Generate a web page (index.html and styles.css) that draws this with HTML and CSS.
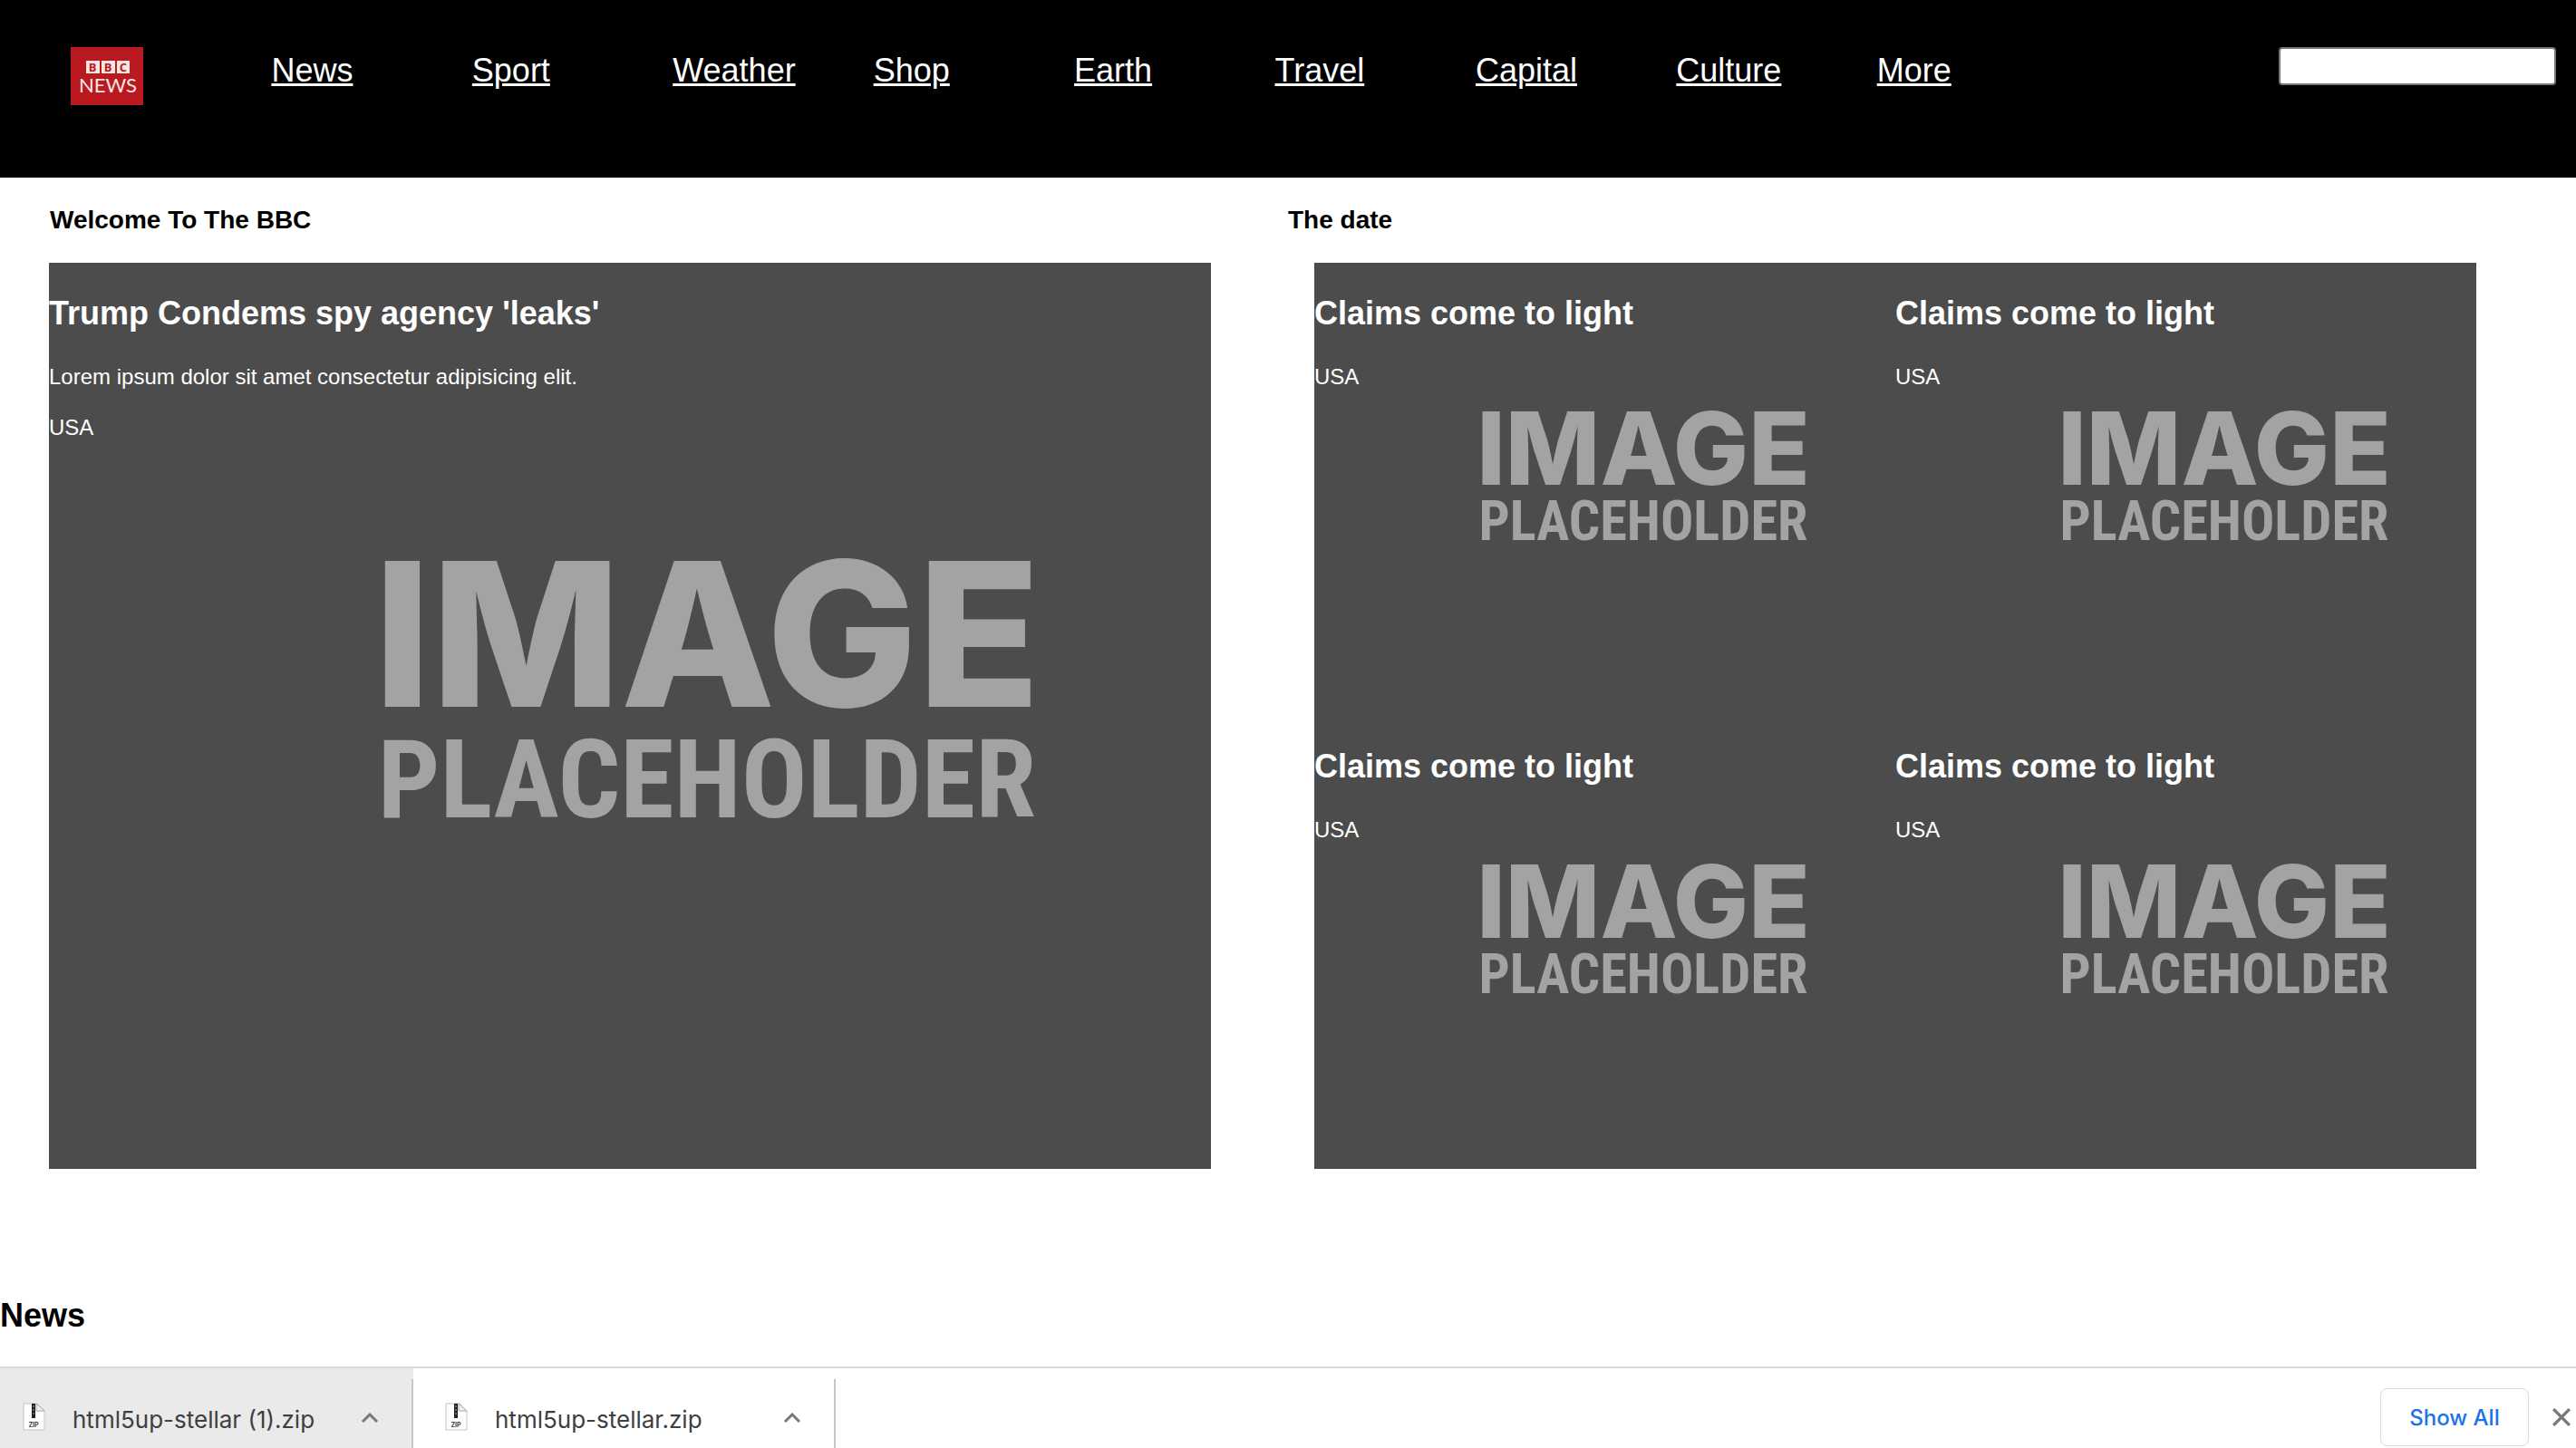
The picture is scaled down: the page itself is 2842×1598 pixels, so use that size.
FILE: index.html
```html
<!DOCTYPE html>
<html lang="en">
<head>
<meta charset="utf-8">
<title>BBC News</title>
<link rel="stylesheet" href="styles.css">
</head>
<body>
<svg class="sprite" aria-hidden="true">
  <symbol id="placeholder" viewBox="0 0 1282 1001">
    <text class="ph-image" x="726" y="491">IMAGE</text>
    <text class="ph-word" x="726" y="613">PLACEHOLDER</text>
  </symbol>
  <symbol id="zip" viewBox="0 0 26 34">
    <path d="M1 2h15l8 8v21H1z" fill="#fdfdfd" stroke="#c4c4c4" stroke-width="1"/>
    <path d="M15 2v8h9z" fill="#f2f2f2" stroke="#a8a8a8" stroke-width="1"/>
    <path d="M10 2h4v16h-4z" fill="#222"/>
    <path d="M12 4v12" stroke="#aaa" stroke-width="1" stroke-dasharray="2 2"/>
    <text class="zip-label" x="12" y="28">ZIP</text>
  </symbol>
  <symbol id="chevron" viewBox="0 0 20 14">
    <path d="M2 12l8-8 8 8" fill="none" stroke="#75787b" stroke-width="3"/>
  </symbol>
</svg>

<header class="header">
  <nav class="nav">
    <a class="logo" href="#" aria-label="BBC News home">
      <svg class="logo-mark" viewBox="0 0 80 64">
        <path fill="#bb1920" d="M0 0h80v64H0z"/>
        <path fill="#f6e6e6" d="M17 15h15v14H17zM34 15h15v14H34zM51 15h14v14H51z"/>
        <text class="logo-bbc" x="24" y="27">B</text>
        <text class="logo-bbc" x="41" y="27">B</text>
        <text class="logo-bbc" x="58" y="27">C</text>
        <text class="logo-news" x="41" y="50">NEWS</text>
      </svg>
    </a>
    <a class="nav-link" href="#">News</a>
    <a class="nav-link" href="#">Sport</a>
    <a class="nav-link" href="#">Weather</a>
    <a class="nav-link" href="#">Shop</a>
    <a class="nav-link" href="#">Earth</a>
    <a class="nav-link" href="#">Travel</a>
    <a class="nav-link" href="#">Capital</a>
    <a class="nav-link" href="#">Culture</a>
    <a class="nav-link" href="#">More</a>
  </nav>
  <input class="search" type="text" aria-label="Search">
</header>

<main class="main">
  <div class="titles">
    <h3 class="title welcome">Welcome To The BBC</h3>
    <h3 class="title">The date</h3>
  </div>
  <div class="stories">
    <article class="story lead">
      <svg class="backdrop" aria-hidden="true"><use href="#placeholder"/></svg>
      <h2 class="headline">Trump Condems spy agency 'leaks'</h2>
      <p class="copy">Lorem ipsum dolor sit amet consectetur adipisicing elit.</p>
      <p class="copy">USA</p>
    </article>
    <div class="story-grid">
      <article class="story">
        <svg class="backdrop" aria-hidden="true"><use href="#placeholder"/></svg>
        <h2 class="headline">Claims come to light</h2>
        <p class="copy">USA</p>
      </article>
      <article class="story">
        <svg class="backdrop" aria-hidden="true"><use href="#placeholder"/></svg>
        <h2 class="headline">Claims come to light</h2>
        <p class="copy">USA</p>
      </article>
      <article class="story">
        <svg class="backdrop" aria-hidden="true"><use href="#placeholder"/></svg>
        <h2 class="headline">Claims come to light</h2>
        <p class="copy">USA</p>
      </article>
      <article class="story">
        <svg class="backdrop" aria-hidden="true"><use href="#placeholder"/></svg>
        <h2 class="headline">Claims come to light</h2>
        <p class="copy">USA</p>
      </article>
    </div>
  </div>
  <h2 class="section-title">News</h2>
</main>

<footer class="downloads">
  <button class="download active" type="button">
    <svg class="zip"><use href="#zip"/></svg>
    <span class="file">html5up-stellar (1).zip</span>
    <svg class="chevron"><use href="#chevron"/></svg>
  </button>
  <button class="download" type="button">
    <svg class="zip"><use href="#zip"/></svg>
    <span class="file">html5up-stellar.zip</span>
    <svg class="chevron"><use href="#chevron"/></svg>
  </button>
  <button class="show-all" type="button">Show All</button>
  <button class="close" type="button" aria-label="Close">
    <svg class="close-icon" viewBox="0 0 18 18"><path d="M1 1l16 16M17 1L1 17" stroke="#75787b" stroke-width="3"/></svg>
  </button>
</footer>
</body>
</html>
```
FILE: styles.css
```css
* { box-sizing: border-box; }

body {
  margin: 0;
  min-height: 100vh;
  display: flex;
  flex-direction: column;
  overflow: hidden;
  background: #fff;
  color: #000;
  font-family: "Liberation Sans", Arial, sans-serif;
  font-size: 24px;
}

h2, h3, p { margin: 0; }
.sprite { display: none; }

/* Header */
.header {
  display: flex;
  justify-content: space-between;
  align-items: flex-start;
  height: 196px;
  padding: 52px 22px 0 78px;
  background: #000;
}
.nav {
  display: grid;
  grid-template-columns: repeat(10, 1fr);
  width: 80.75%;
  align-items: start;
}
.logo, .logo-mark { display: block; width: 80px; height: 64px; }
.logo-bbc { font: bold 13px "Open Sans", sans-serif; fill: #bb1920; text-anchor: middle; }
.logo-news { font: 22px Lato, sans-serif; fill: #f6e6e6; text-anchor: middle; }
.nav-link { color: #fff; font-size: 36px; line-height: 52px; }
.search {
  width: 306px;
  height: 42px;
  padding: 2px 4px;
  border: 2px solid #767676;
  border-radius: 4px;
  background: #fff;
  font: inherit;
}

/* Stories */
.main { flex: 1; }
.titles {
  display: grid;
  grid-template-columns: 1fr 1fr;
  padding: 31px 0;
}
.title { font-size: 28px; line-height: 32px; }
.welcome { padding-left: 55px; }
.stories {
  display: grid;
  grid-template-columns: 1fr 1fr;
  column-gap: 114px;
  padding: 0 110px 0 54px;
}
.story-grid { display: grid; grid-template-columns: 1fr 1fr; }
.story {
  position: relative;
  min-height: 500px;
  padding-top: 35px;
  background: #4c4c4c;
  color: #fff;
}
.backdrop { position: absolute; inset: 0; width: 100%; height: 100%; }
.ph-image { font: 800 222px Inter, sans-serif; fill: #a3a3a3; text-anchor: middle; }
.ph-word { font: bold 121px "Roboto Condensed", Roboto, sans-serif; fill: #a3a3a3; text-anchor: middle; }
.headline, .copy { position: relative; }
.headline { font-size: 36px; line-height: 42px; margin-bottom: 35px; }
.copy { font-size: 24px; line-height: 28px; margin-bottom: 28px; }
.section-title { margin-top: 141px; font-size: 36px; line-height: 42px; }

/* Downloads bar */
.downloads {
  display: flex;
  align-items: flex-start;
  height: 90px;
  border-top: 2px solid #dadae2;
  background: #fff;
}
.download {
  display: flex;
  align-items: center;
  width: 466px;
  height: 100px;
  padding: 8px 38px 0 35px;
  border: 0;
  background: linear-gradient(#c6c6c6, #c6c6c6) right 12px / 2px 100% no-repeat;
  color: #3c4043;
}
.download.active { width: 456px; padding-left: 25px; background-color: #eaeaea; }
.zip { width: 26px; height: 34px; }
.zip-label { font: bold 7px Inter, sans-serif; fill: #444; text-anchor: middle; }
.file { flex: 1; margin-left: 29px; padding-top: 4px; text-align: left; font: 26px Inter, sans-serif; }
.chevron { width: 20px; height: 14px; }
.show-all {
  width: 164px;
  height: 64px;
  margin: 22px 26px 0 auto;
  border: 1px solid #dadce0;
  border-radius: 8px;
  background: #fff;
  color: #1a73e8;
  font: 500 24px Inter, sans-serif;
}
.close { margin: 44px 6px 0 0; padding: 0; border: 0; background: none; }
.close-icon { display: block; width: 20px; height: 20px; }
```
